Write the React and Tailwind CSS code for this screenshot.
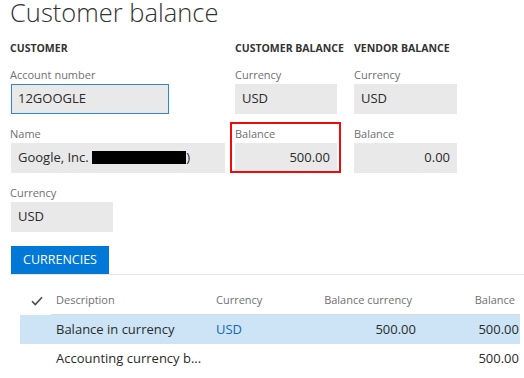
const font = { fontFamily: '"Open Sans", "Noto Sans", Arial, sans-serif' };

function Field({ label, children, className = "", boxClass = "", right = false }) {
  return (
    <div className={className}>
      <div className="h-[14px] text-[11px] leading-[14px] text-[#707070]">{label}</div>
      <div
        className={`mt-[2px] flex h-[30px] items-center border bg-[#e9e9e9] px-[6px] text-[13px] text-[#2b2b2b] ${
          right ? "justify-end" : ""
        } ${boxClass}`}
      >
        {children}
      </div>
    </div>
  );
}

function Check() {
  return (
    <svg width="12" height="10" viewBox="0 0 12 10" fill="none">
      <path d="M1 5.2 L4.3 8.5 L11 1.2" stroke="#4a4a4a" strokeWidth="1.6" />
    </svg>
  );
}

export default function App() {
  return (
    <div className="h-[378px] w-[524px] overflow-hidden bg-white" style={font}>
      <div className="pl-[10px]">
        <h1 className="h-[24px] text-[25.5px] font-light leading-[24px] text-[#333]">
          Customer balance
        </h1>

        <div className="mt-[17px] grid grid-cols-[225px_119px_1fr] text-[10.5px] font-bold leading-[14px] text-[#333]">
          <div>CUSTOMER</div>
          <div>CUSTOMER BALANCE</div>
          <div>VENDOR BALANCE</div>
        </div>

        <div className="mt-[13px] grid grid-cols-[225px_119px_1fr] gap-y-[13px]">
          <Field label="Account number" className="w-[159px]" boxClass="ml-px border-[#2b88d8]">
            12GOOGLE
          </Field>
          <Field label="Currency" className="w-[102px]" boxClass="border-[#e9e9e9]">
            USD
          </Field>
          <Field label="Currency" className="w-[103px]" boxClass="border-[#e9e9e9]">
            USD
          </Field>

          <Field label="Name" className="w-[215px]" boxClass="ml-px border-[#e9e9e9]">
            <span className="whitespace-nowrap">
              Google, Inc.{" "}
              <span className="inline-block h-[13px] w-[94px] translate-y-[2px] bg-black" />)
            </span>
          </Field>
          <div className="relative">
            <Field label="Balance" className="w-[102px]" boxClass="border-[#e9e9e9]" right>
              500.00
            </Field>
            <div className="pointer-events-none absolute -left-[5px] -top-[5px] h-[51px] w-[111px] border-2 border-[#f00a0a]" />
          </div>
          <Field label="Balance" className="w-[103px]" boxClass="border-[#e9e9e9]" right>
            0.00
          </Field>

          <Field label="Currency" className="w-[103px]" boxClass="ml-px border-[#e9e9e9]">
            USD
          </Field>
        </div>

        <div className="mt-[14px] border-b border-[#e6e6e6] pl-px">
          <div className="flex h-[28px] w-[98px] items-center justify-center bg-[#0078d7] text-[12.5px] text-white">
            CURRENCIES
          </div>
        </div>
      </div>

      <div className="ml-[20px] mt-[11px] w-[500px] text-[13px] text-[#2b2b2b]">
        <div className="grid h-[29px] grid-cols-[31px_160px_100px_109px_100px] items-center text-[11px] text-[#707070]">
          <div className="flex justify-center pl-[2px]">
            <Check />
          </div>
          <div className="flex h-full items-center border-b border-[#dadada] pl-[5px]">Description</div>
          <div className="flex h-full items-center border-b border-[#dadada] pl-[5px]">Currency</div>
          <div className="flex h-full items-center justify-end border-b border-[#dadada] pr-[8px]">
            Balance currency
          </div>
          <div className="flex h-full items-center justify-end border-b border-[#dadada] pr-[5px]">
            Balance
          </div>
        </div>

        <div className="grid h-[29px] grid-cols-[31px_160px_100px_109px_100px] items-center bg-[#cce4f6]">
          <div />
          <div className="pl-[5px]">Balance in currency</div>
          <div className="pl-[5px] text-[#1467b8]">USD</div>
          <div className="pr-[4px] text-right">500.00</div>
          <div className="pr-px text-right">500.00</div>
        </div>

        <div className="grid h-[29px] grid-cols-[31px_160px_100px_109px_100px] items-center">
          <div />
          <div className="truncate pl-[5px]">Accounting currency b...</div>
          <div />
          <div />
          <div className="pr-px text-right">500.00</div>
        </div>
      </div>
    </div>
  );
}
